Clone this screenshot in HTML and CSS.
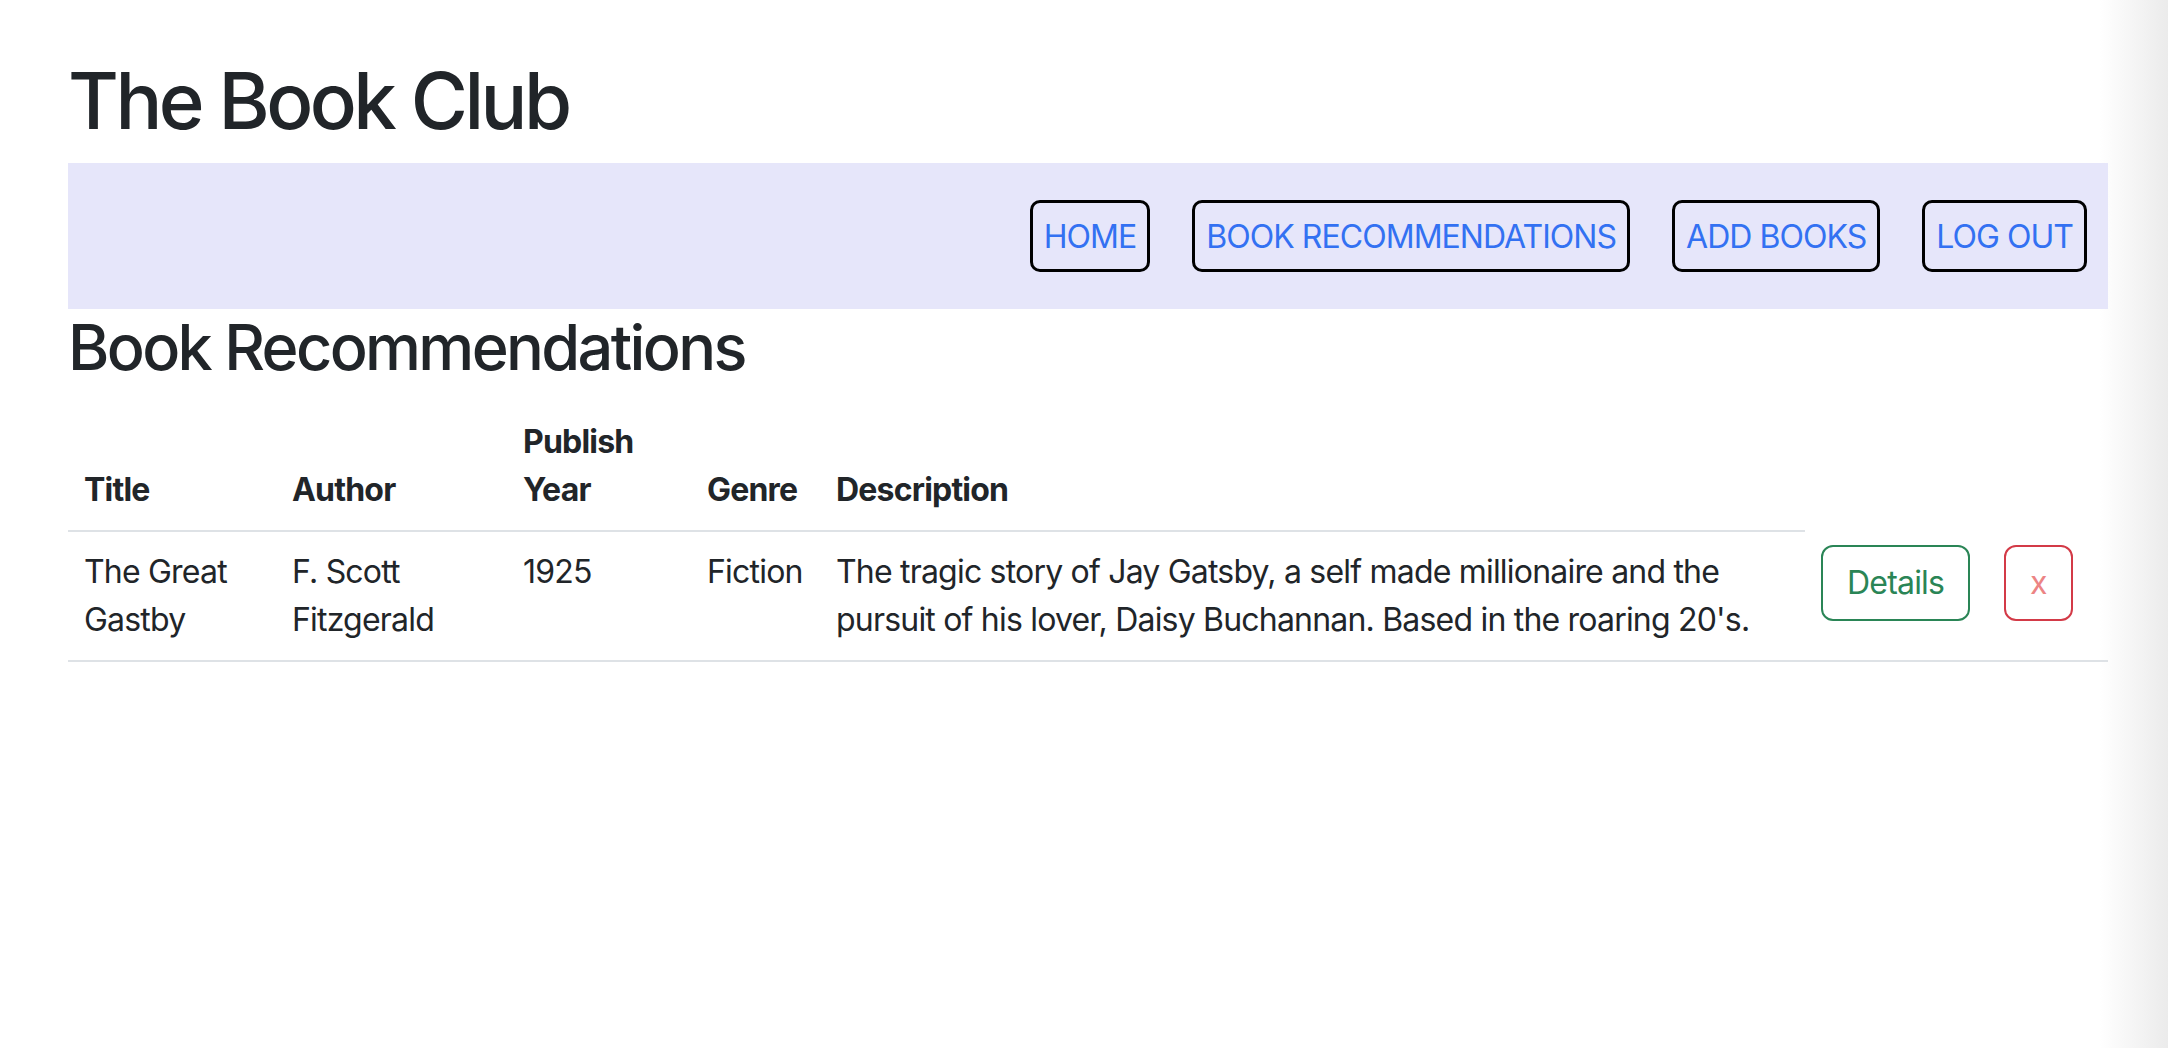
FILE: index.html
```html
<!DOCTYPE html>
<html lang="en">
<head>
<meta charset="utf-8">
<title>The Book Club</title>
<link rel="stylesheet" href="styles.css">
</head>
<body>
<div class="page">
  <h1 class="site-title">The Book Club</h1>
  <nav class="navbar">
    <a class="nav-link" href="#">HOME</a>
    <a class="nav-link" href="#">BOOK RECOMMENDATIONS</a>
    <a class="nav-link" href="#">ADD BOOKS</a>
    <a class="nav-link" href="#">LOG OUT</a>
  </nav>
  <h2 class="page-title">Book Recommendations</h2>
  <table class="books">
    <colgroup>
      <col class="col-title">
      <col class="col-author">
      <col class="col-year">
      <col class="col-genre">
      <col class="col-desc">
      <col class="col-details">
      <col class="col-delete">
    </colgroup>
    <thead>
      <tr>
        <th>Title</th>
        <th>Author</th>
        <th>Publish Year</th>
        <th>Genre</th>
        <th>Description</th>
      </tr>
    </thead>
    <tbody>
      <tr>
        <td>The Great Gastby</td>
        <td>F. Scott Fitzgerald</td>
        <td>1925</td>
        <td>Fiction</td>
        <td>The tragic story of Jay Gatsby, a self made millionaire and the pursuit of his lover, Daisy Buchannan. Based in the roaring 20's.</td>
        <td><button class="btn btn-details" type="button">Details</button></td>
        <td><button class="btn btn-delete" type="button">x</button></td>
      </tr>
    </tbody>
  </table>
</div>
</body>
</html>
```

FILE: styles.css
```css
html {
  background: linear-gradient(to right, #ffffff 2100px, #ebebeb 2168px);
  min-height: 100%;
}

body {
  margin: 0;
  font-family: Inter, "Noto Sans", sans-serif;
  font-size: 32px;
  line-height: 1.5;
  letter-spacing: -0.025em;
  color: #212529;
}

.page {
  width: 2040px;
  padding: 53px 0 0 68px;
}

.site-title {
  margin: 0 0 14px;
  font-size: 78px;
  font-weight: 500;
  line-height: 96px;
  letter-spacing: -0.045em;
}

.navbar {
  height: 146px;
  background: #e6e6fa;
  display: flex;
  justify-content: flex-end;
  align-items: center;
}

.nav-link {
  margin: 0 21px;
  padding: 10px 11px 8px 11px;
  border: 3px solid #000;
  border-radius: 10px;
  color: #3371f2;
  text-decoration: none;
  line-height: 48px;
  letter-spacing: -0.03em;
}

.page-title {
  margin: 0 0 16px;
  font-size: 63px;
  font-weight: 500;
  line-height: 77px;
  letter-spacing: -0.042em;
}

.books {
  width: 2040px;
  border-collapse: collapse;
  table-layout: fixed;
}

.col-title { width: 208px; }
.col-author { width: 231px; }
.col-year { width: 184px; }
.col-genre { width: 129px; }
.col-desc { width: 985px; }
.col-details { width: 183px; }
.col-delete { width: 120px; }

.books th,
.books td {
  padding: 16px;
  text-align: left;
  border-bottom: 2px solid #dee2e6;
}

.books th {
  font-weight: 700;
  vertical-align: bottom;
}

.books td {
  vertical-align: top;
}

.btn {
  font-family: inherit;
  font-size: 32px;
  line-height: 48px;
  letter-spacing: -0.025em;
  padding: 12px 24px;
  border: 2px solid;
  border-radius: 12px;
  background: transparent;
  margin-top: -2px;
}

.btn-details {
  color: #2a8556;
  border-color: #2a8556;
}

.btn-delete {
  color: #ec8484;
  border-color: #d33a47;
}
```
